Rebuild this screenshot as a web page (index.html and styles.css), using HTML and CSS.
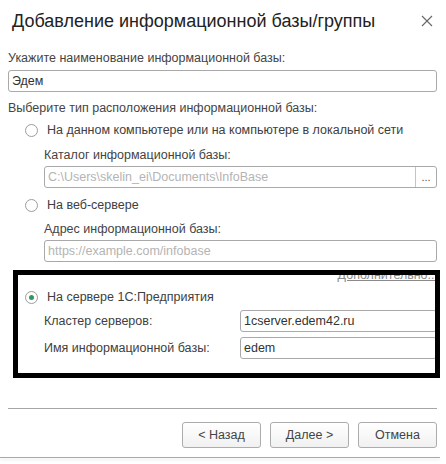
FILE: index.html
```html
<!DOCTYPE html>
<html lang="ru">
<head>
<meta charset="utf-8">
<link rel="stylesheet" href="styles.css">
</head>
<body>
<div class="window">
  <div class="header">
    <div class="title">Добавление информационной базы/группы</div>
    <svg class="close" width="12" height="12" viewBox="0 0 12 12"><path d="M1 1L11 11M11 1L1 11" stroke="#666" stroke-width="1.1" fill="none"/></svg>
  </div>
  <div class="content">
    <div class="label l1">Укажите наименование информационной базы:</div>
    <div class="input i1"><span class="val">Эдем</span></div>
    <div class="label l2">Выберите тип расположения информационной базы:</div>
    <div class="radio-row r1"><span class="radio"></span><span class="rtext">На данном компьютере или на компьютере в локальной сети</span></div>
    <div class="label sub l3">Каталог информационной базы:</div>
    <div class="input sub i2"><span class="val ph">C:\Users\skelin_ei\Documents\InfoBase</span><span class="dots">...</span></div>
    <div class="radio-row r2"><span class="radio"></span><span class="rtext">На веб-сервере</span></div>
    <div class="label sub l4">Адрес информационной базы:</div>
    <div class="input sub i3"><span class="val ph">https://example.com/infobase</span></div>
    <div class="link-row"><span class="link">Дополнительно...</span></div>
    <div class="radio-row r3"><span class="radio checked"></span><span class="rtext">На сервере 1С:Предприятия</span></div>
    <div class="field-row f1"><span class="flabel">Кластер серверов:</span><div class="input fin"><span class="val">1cserver.edem42.ru</span></div></div>
    <div class="field-row f2"><span class="flabel">Имя информационной базы:</span><div class="input fin"><span class="val">edem</span></div></div>
  </div>
  <div class="footer">
    <div class="sep"></div>
    <div class="buttons">
      <div class="btn">&lt; Назад</div>
      <div class="btn">Далее &gt;</div>
      <div class="btn">Отмена</div>
    </div>
  </div>
  <div class="bottom-edge"></div>
  <div class="highlight"></div>
</div>
</body>
</html>
```
FILE: styles.css
```css
html, body {
  margin: 0;
  padding: 0;
  background: #ffffff;
}
body {
  font-family: "Liberation Sans", Arial, sans-serif;
  font-size: 12.5px;
  color: #444444;
}
.window {
  position: relative;
  width: 446px;
  height: 464px;
  background: #ffffff;
}
.header {
  height: 42px;
  display: flex;
  align-items: center;
  justify-content: space-between;
  padding: 0 13px 0 12px;
}
.title {
  font-size: 18px;
  color: #222222;
  white-space: nowrap;
}
.close {
  display: block;
  margin-top: -1px;
}
.content {
  padding: 0 9px 0 8px;
  display: flex;
  flex-direction: column;
}
.label {
  line-height: 18px;
  height: 18px;
  white-space: nowrap;
}
.l1 { margin-top: 7px; }
.input {
  height: 22px;
  box-sizing: border-box;
  border: 1px solid #a9a9a9;
  border-radius: 3px;
  display: flex;
  align-items: center;
  background: #ffffff;
  color: #333333;
}
.val {
  padding-left: 3px;
  flex: 1;
  white-space: nowrap;
  overflow: hidden;
}
.ph { color: #b4b4b4; }
.i1 { margin-top: 3px; }
.l2 { margin-top: 7px; }
.radio-row {
  height: 22px;
  display: flex;
  align-items: center;
  padding-left: 17px;
}
.r1 { margin-top: 2px; }
.radio {
  width: 13px;
  height: 13px;
  box-sizing: border-box;
  border: 1px solid #9c9c9c;
  border-radius: 50%;
  background: #ffffff;
  margin-right: 9px;
  display: flex;
  align-items: center;
  justify-content: center;
}
.radio.checked::after {
  content: "";
  width: 5px;
  height: 5px;
  border-radius: 50%;
  background: #2f9a5c;
}
.rtext { color: #404040; white-space: nowrap; }
.sub { margin-left: 36px; }
.l3 { margin-top: 5px; }
.i2 { margin-top: 2px; }
.dots {
  width: 21px;
  height: 100%;
  border-left: 1px solid #c4c4c4;
  display: flex;
  align-items: center;
  justify-content: center;
  color: #555555;
  font-size: 11px;
  line-height: 1;
  padding-top: 1px;
  box-sizing: border-box;
}
.r2 { margin-top: 6px; }
.l4 { margin-top: 4px; }
.i3 { margin-top: 2px; }
.link-row {
  margin-top: 4px;
  height: 18px;
  display: flex;
  justify-content: flex-end;
  align-items: center;
}
.link {
  color: #8a8a8a;
  text-decoration: underline;
  margin-right: -1px;
}
.r3 { margin-top: 2px; }
.field-row {
  display: flex;
  align-items: center;
  height: 22px;
  padding-left: 36px;
}
.f1 { margin-top: 2px; }
.f2 { margin-top: 5px; }
.flabel {
  width: 196px;
  color: #404040;
  white-space: nowrap;
}
.fin {
  flex: 1;
}
.footer {
  margin-top: 49px;
  padding: 0 9px 0 8px;
}
.sep {
  height: 1px;
  background: #a6a6a6;
}
.buttons {
  margin-top: 13px;
  display: flex;
  justify-content: flex-end;
  gap: 9px;
}
.btn {
  width: 79px;
  height: 26px;
  box-sizing: border-box;
  border: 1px solid #acacac;
  border-radius: 3px;
  background: linear-gradient(#ffffff, #f1f1f1);
  display: flex;
  align-items: center;
  justify-content: center;
  color: #444444;
}
.bottom-edge {
  margin-top: 9px;
  width: 440px;
  height: 1px;
  background: #a8a8a8;
  box-shadow: 0 2px 3px rgba(0, 0, 0, 0.12);
}
.highlight {
  position: absolute;
  left: 13px;
  top: 270px;
  width: 427px;
  height: 108px;
  box-sizing: border-box;
  border: 5px solid #000000;
}
```
